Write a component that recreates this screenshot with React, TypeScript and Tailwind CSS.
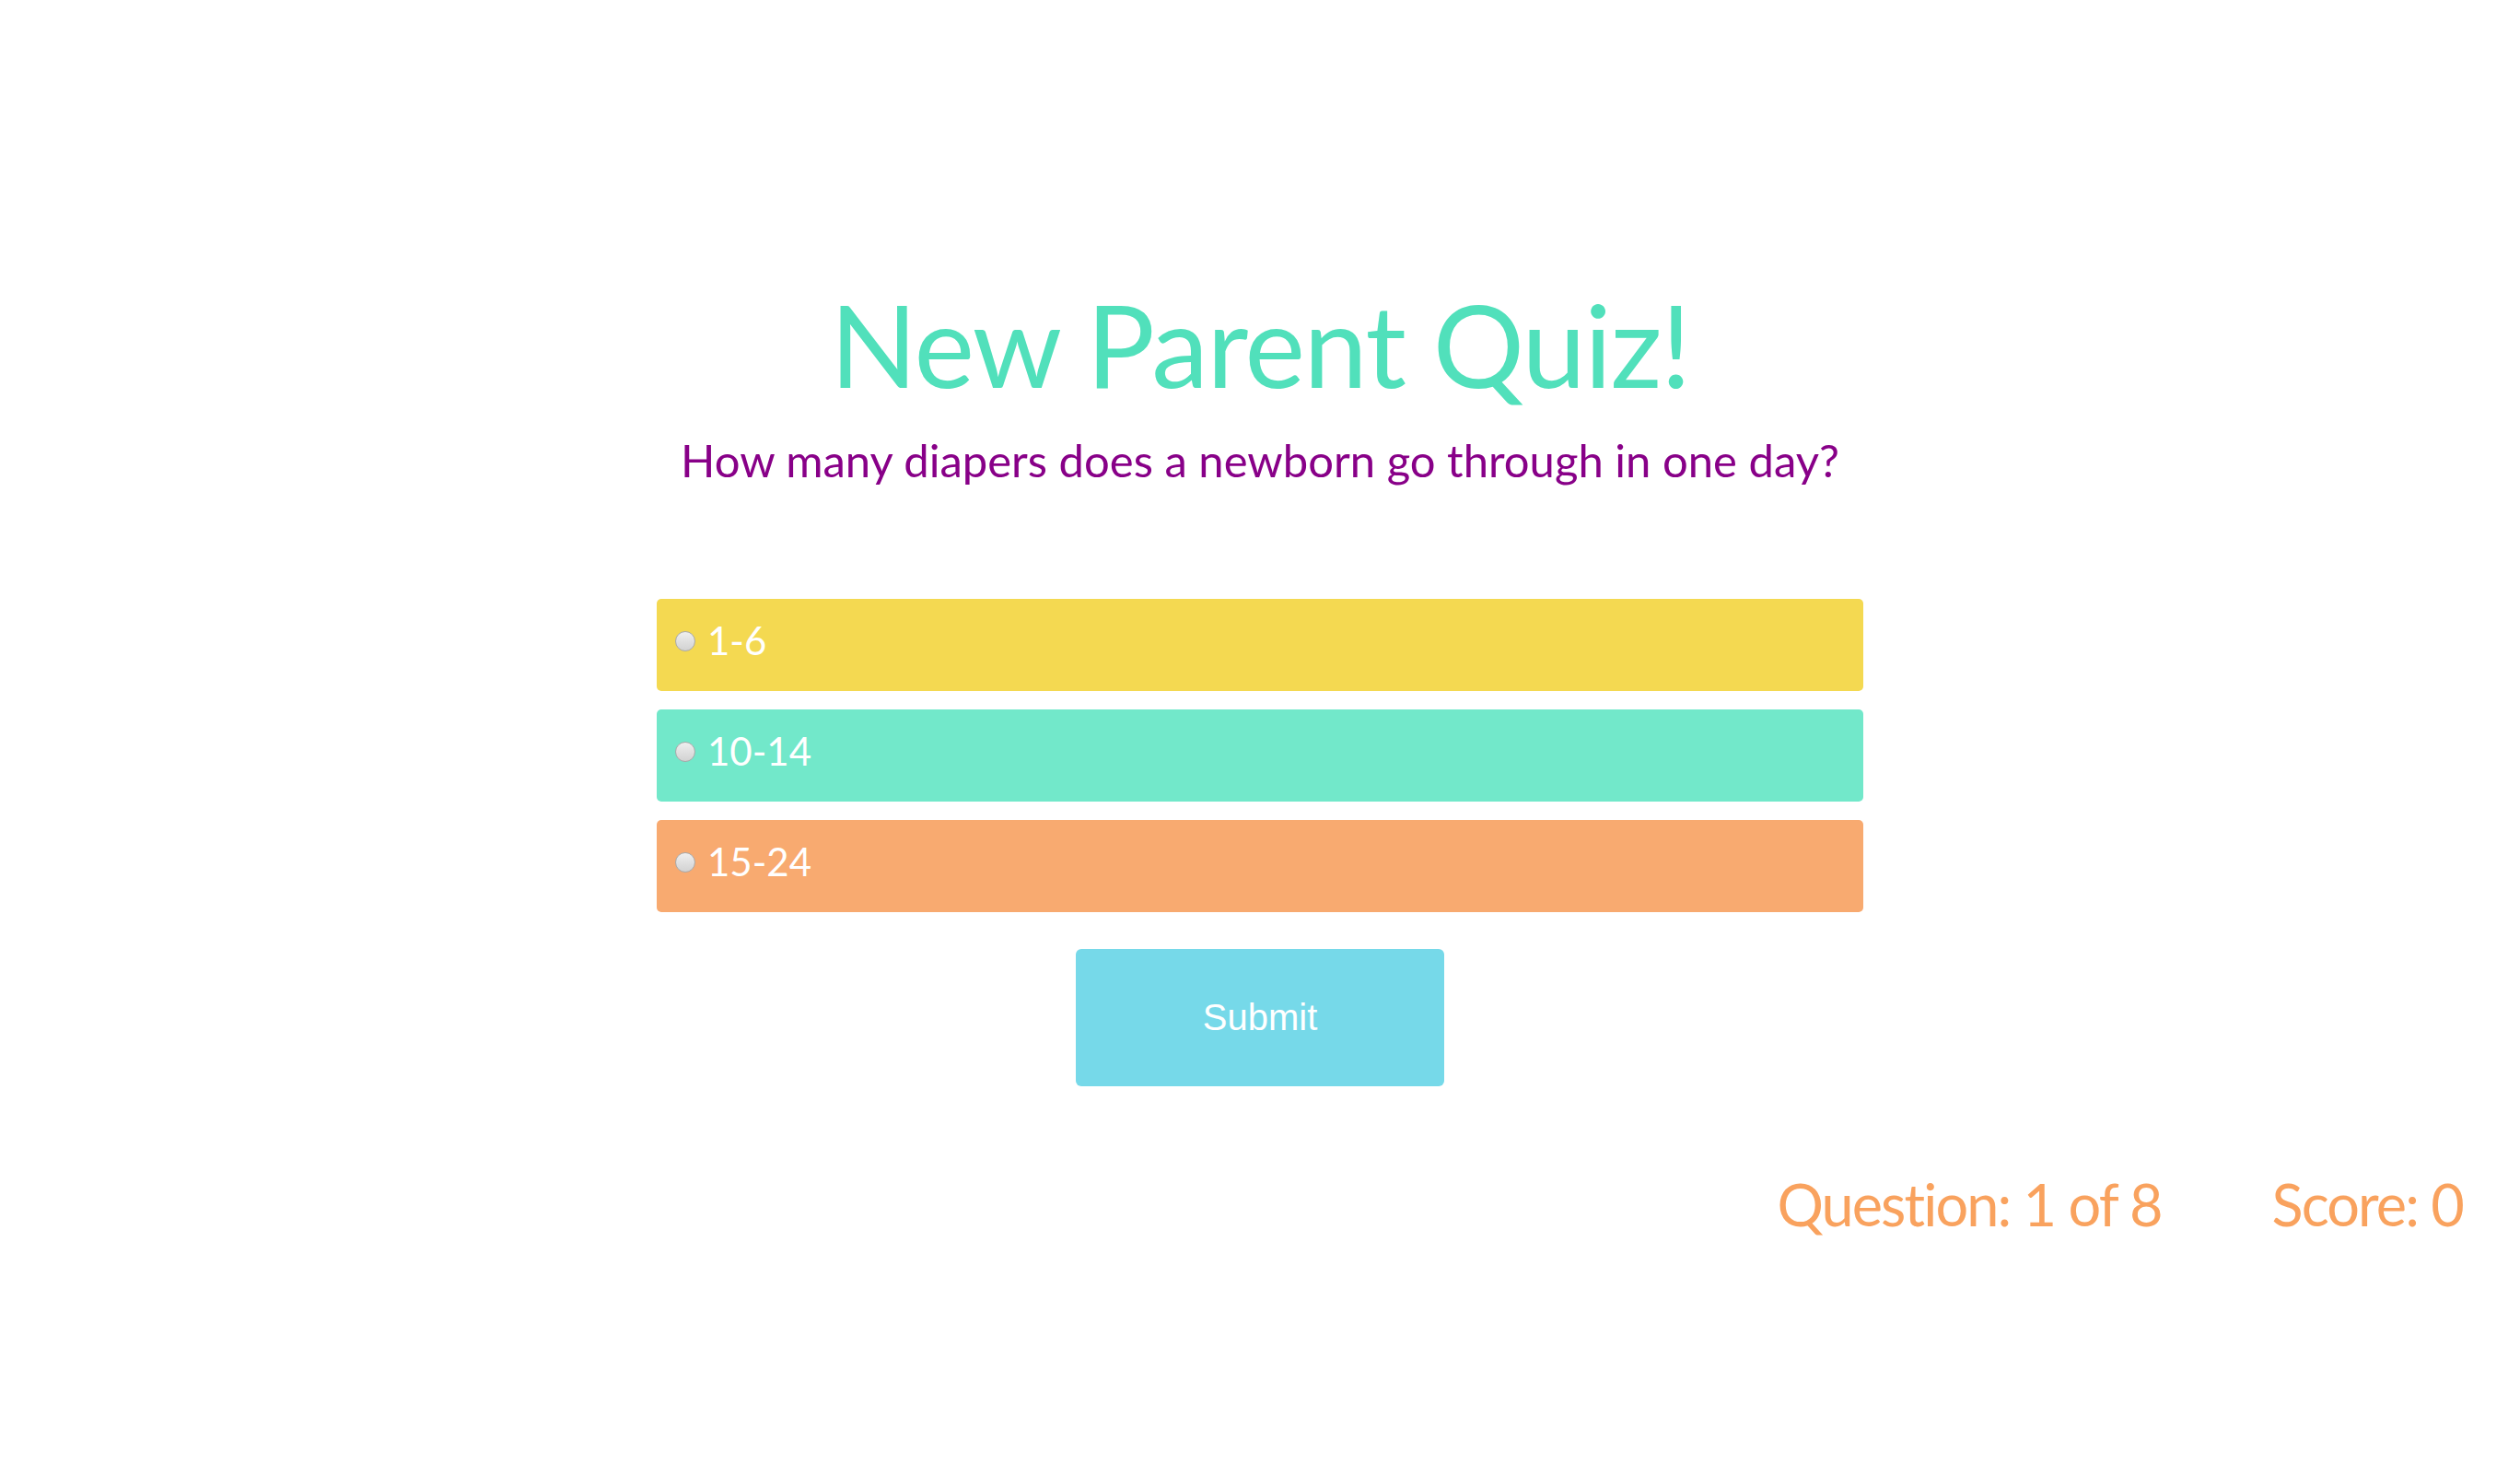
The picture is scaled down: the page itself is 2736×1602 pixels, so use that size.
import React, { useState } from 'react';

interface Choice {
    label: string;
    color: string;
}

const choices: Choice[] = [
    { label: '1-6', color: 'bg-[#f4d951]' },
    { label: '10-14', color: 'bg-[#72e8ca]' },
    { label: '15-24', color: 'bg-[#f8aa70]' },
];

const App: React.FC = () => {
    const [selected, setSelected] = useState<number | null>(null);

    return (
        <div className="min-h-screen bg-white font-['Lato',sans-serif] pt-[299px] pb-[200px]">
            <div className="flex flex-col items-center">
                <h1 className="text-[124px] leading-[1.2] tracking-[-0.012em] text-[#51e0bb]">New Parent Quiz!</h1>
                <h2 className="mt-[22px] text-[49px] leading-[1.2] text-[#880088]">
                    How many diapers does a newborn go through in one day?
                </h2>

                {/* Answers */}
                <div className="mt-[121px] w-[1310px] flex flex-col gap-[20px]">
                    {choices.map((c, i) => (
                        <label
                            key={c.label}
                            onClick={() => setSelected(i)}
                            className={`${c.color} h-[100px] rounded-[5px] flex items-center pl-[20px] pb-[8px] cursor-pointer`}
                        >
                            <span className="shrink-0 w-[22px] h-[22px] rounded-full border border-[#a9a9a9] bg-gradient-to-b from-[#efefef] to-[#d2d2d2] flex items-center justify-center">
                                {selected === i && <span className="w-[9px] h-[9px] rounded-full bg-[#333]" />}
                            </span>
                            <span className="ml-[13px] text-[42px] leading-[1.2] text-white">{c.label}</span>
                        </label>
                    ))}
                </div>

                <button className="mt-[40px] w-[400px] h-[149px] rounded-[6px] bg-[#76d9e9] text-white text-[40px] font-['Liberation_Sans',Arial,sans-serif]">
                    Submit
                </button>
            </div>

            {/* Progress */}
            <div className="mt-[90px] flex justify-end gap-[120px] pr-[62px] text-[63px] leading-[1.2] tracking-[-0.03em] text-[#f9a25e]">
                <span>Question: 1 of 8</span>
                <span>Score: 0</span>
            </div>
        </div>
    );
};

export default App;
